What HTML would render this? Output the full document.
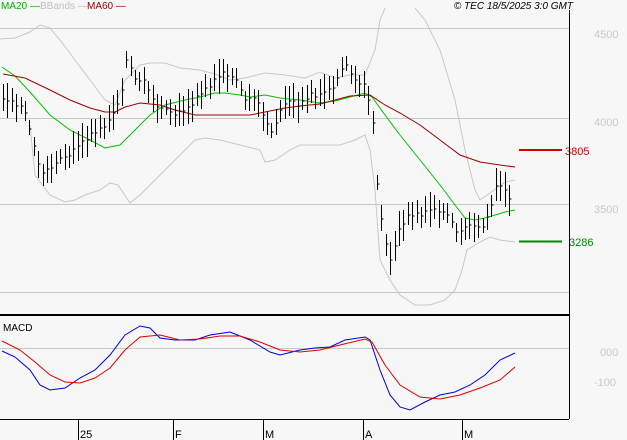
<!DOCTYPE html><html><head><meta charset="utf-8"><style>
html,body{margin:0;padding:0;background:#f7f7f7;width:627px;height:440px;overflow:hidden}
svg{display:block;font-family:"Liberation Sans",sans-serif}
</style></head><body>
<svg id="s" width="627" height="440" viewBox="0 0 627 440" xmlns="http://www.w3.org/2000/svg">
<rect width="627" height="440" fill="#f7f7f7"/>
<g stroke="#c8c8c8" stroke-width="1">
<line x1="0" y1="28.5" x2="569" y2="28.5"/><line x1="0" y1="118.5" x2="569" y2="118.5"/>
<line x1="0" y1="204.5" x2="569" y2="204.5"/><line x1="0" y1="292.5" x2="569" y2="292.5"/>
<line x1="0" y1="348.5" x2="569" y2="348.5"/>
</g>
<g font-size="11" fill="#c8c8c8">
<text x="594" y="38">4500</text><text x="594" y="126">4000</text><text x="594" y="213">3500</text>
<text x="600" y="356">000</text><text x="594" y="386">-100</text>
</g>
<g fill="none" stroke="#c8c8c8" stroke-width="1">
<polyline points="0,39 15,38 30,32 40,25 50,28 60,40 75,60 90,80 105,100 115,105 125,80 140,65 150,63 165,63 180,68 200,70 215,74 230,80 245,78 265,73 285,75 305,78 320,72 335,78 350,75 365,75 375,50 380,20 385,8"/>
<polyline points="415,8 425,20 440,50 455,100 465,150 475,190 480,200 490,193 505,182 515,180"/>
<polyline points="30,125 35,175 50,195 65,202 75,200 85,195 100,190 110,183 118,185 130,203 140,195 160,175 180,155 195,140 205,138 220,140 240,145 260,150 265,162 275,160 290,150 300,145 320,145 340,145 355,140 365,135 370,150 375,190 380,260 390,280 400,295 415,305 430,305 445,300 455,290 462,270 467,250 480,242 490,237 500,240 515,242"/>
</g>
<polyline fill="none" stroke="#00c000" stroke-width="1" points="2,67 15,76 30,92 50,115 70,130 90,140 105,148 120,145 135,130 150,115 165,105 185,100 200,97 215,93 225,93 240,95 250,97 265,95 280,98 300,100 320,103 335,101 350,97 365,93 372,97 385,115 400,135 420,160 440,185 455,205 465,218 475,220 485,218 495,215 505,212 515,210"/>
<polyline fill="none" stroke="#990000" stroke-width="1" points="3,74 25,78 50,90 70,100 90,108 105,112 115,112 125,107 140,103 160,105 175,110 195,115 210,115 230,115 250,115 265,112 285,108 300,106 320,104 335,100 350,96 370,95 385,105 400,113 420,125 440,140 460,155 480,162 500,165 515,167"/>
<path id="bars" fill="none" stroke="#000" stroke-width="1" d=""/>
<line x1="519" y1="150" x2="562" y2="150" stroke="#d00000" stroke-width="2"/>
<line x1="519" y1="241.5" x2="562" y2="241.5" stroke="#008800" stroke-width="2"/>
<text x="565" y="155" font-size="11" fill="#d00000">3805</text>
<text x="569" y="246" font-size="11" fill="#008800">3286</text>
<line x1="0" y1="315" x2="569" y2="315" stroke="#000" stroke-width="2"/>
<line x1="569.5" y1="10" x2="569.5" y2="419" stroke="#000"/>
<line x1="0" y1="419.5" x2="569" y2="419.5" stroke="#000"/>
<text x="3" y="331" font-size="10" fill="#000">MACD</text>
<polyline fill="none" stroke="#0000dd" points="2,351 15,357 30,370 40,385 50,390 65,388 80,378 95,370 110,355 125,335 140,326 150,328 160,338 175,340 195,340 210,335 230,332 250,340 270,352 280,355 300,350 315,348 330,347 345,340 365,337 370,340 380,370 390,395 400,407 410,410 425,402 440,395 455,392 470,385 485,375 500,360 515,353"/>
<polyline fill="none" stroke="#dd0000" points="2,341 20,350 35,362 50,375 65,382 80,383 95,378 110,368 125,350 140,337 160,335 180,340 200,339 220,336 240,336 260,342 280,350 300,352 320,350 340,345 365,339 372,342 385,365 400,385 420,397 440,399 460,395 480,388 500,380 515,367"/>
<g stroke="#000"><line x1="78.5" y1="420" x2="78.5" y2="440"/><line x1="173.5" y1="420" x2="173.5" y2="440"/><line x1="263.5" y1="420" x2="263.5" y2="440"/><line x1="363.5" y1="420" x2="363.5" y2="440"/><line x1="462.5" y1="420" x2="462.5" y2="440"/></g>
<g font-size="11" fill="#000"><text x="80" y="438">25</text><text x="175" y="438">F</text><text x="265" y="438">M</text><text x="365" y="438">A</text><text x="464" y="438">M</text></g>
<g font-size="10">
<text x="1" y="9" fill="#00b000">MA20 —</text>
<text x="40" y="9" fill="#c0c0c0">BBands —</text>
<text x="87" y="9" fill="#990000">MA60 —</text>
<text x="573" y="9" fill="#000" font-style="italic" text-anchor="end">© TEC 18/5/2025 3:0 GMT</text>
</g>
</svg>
<script>
var k=[[3,100],[20,105],[25,115],[35,150],[40,172],[50,168],[60,160],[70,155],[80,143],[90,135],[100,130],[110,120],[120,100],[127,55],[133,80],[145,80],[150,92],[155,105],[165,110],[175,115],[185,110],[195,100],[205,90],[215,80],[225,72],[235,80],[245,100],[255,95],[265,120],[272,135],[280,110],[290,100],[300,105],[310,95],[320,95],[330,90],[340,75],[345,65],[355,80],[365,85],[372,115],[378,200],[385,240],[390,262],[395,245],[400,225],[410,215],[420,215],[430,210],[440,210],[450,220],[458,235],[465,225],[475,225],[482,230],[490,210],[497,183],[503,188],[510,198]];
function f(x){for(var i=0;i<k.length-1;i++){if(x>=k[i][0]&&x<=k[i+1][0]){var t=(x-k[i][0])/(k[i+1][0]-k[i][0]);return k[i][1]+t*(k[i+1][1]-k[i][1]);}}return k[k.length-1][1];}
var d="",s=7;
for(var x=3;x<=511;x+=4.4){var X=Math.round(x)+.5,y=f(x),h=14+((s=(s*73+11)%97)%24),o=(s%9)-4;var a=Math.round(y-h/2+o),b=Math.round(y+h/2+o),c=Math.round(y+o/2);
d+="M"+X+" "+a+"V"+b+"M"+X+" "+c+"h2";}
document.getElementById("bars").setAttribute("d",d);
</script>
</body></html>
